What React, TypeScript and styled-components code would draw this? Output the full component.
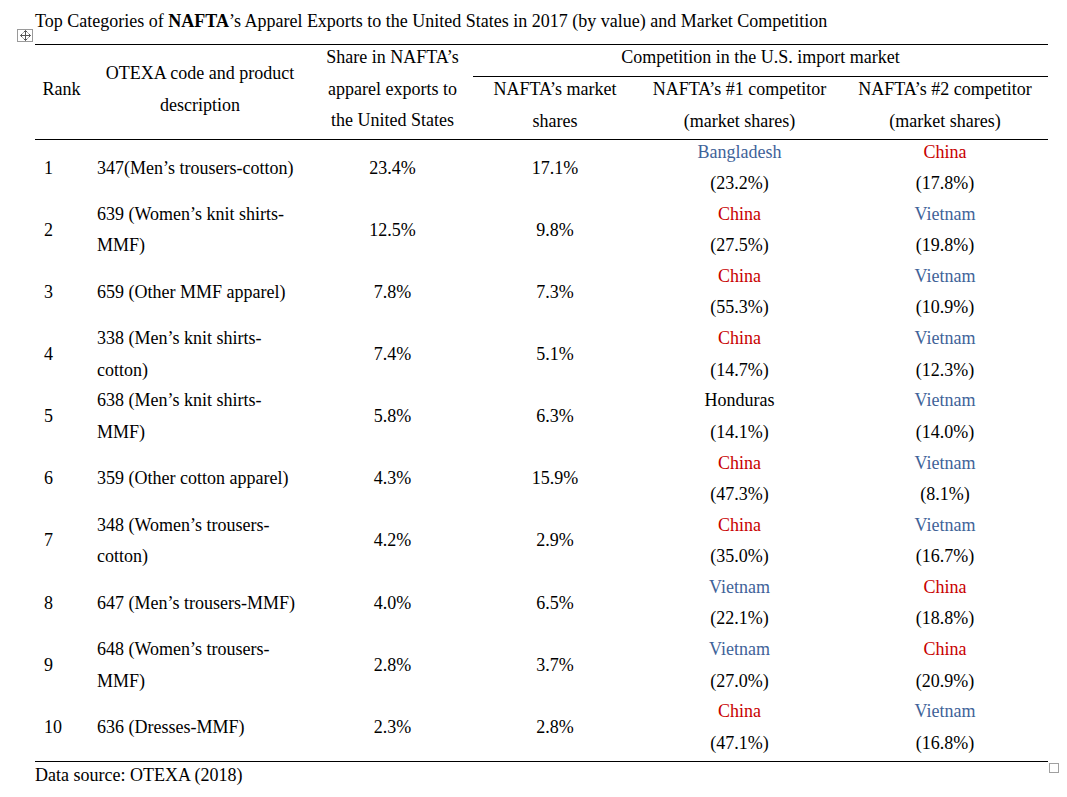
import styled, { createGlobalStyle } from "styled-components";

type Tone = "red" | "blue" | "black";

interface Competitor {
  name: string;
  tone: Tone;
  share: string;
}

interface Row {
  rank: number;
  product: string[];
  share: string;
  nafta: string;
  first: Competitor;
  second: Competitor;
}

const rows: Row[] = [
  { rank: 1, product: ["347(Men’s trousers-cotton)"], share: "23.4%", nafta: "17.1%", first: { name: "Bangladesh", tone: "blue", share: "(23.2%)" }, second: { name: "China", tone: "red", share: "(17.8%)" } },
  { rank: 2, product: ["639 (Women’s knit shirts-", "MMF)"], share: "12.5%", nafta: "9.8%", first: { name: "China", tone: "red", share: "(27.5%)" }, second: { name: "Vietnam", tone: "blue", share: "(19.8%)" } },
  { rank: 3, product: ["659 (Other MMF apparel)"], share: "7.8%", nafta: "7.3%", first: { name: "China", tone: "red", share: "(55.3%)" }, second: { name: "Vietnam", tone: "blue", share: "(10.9%)" } },
  { rank: 4, product: ["338 (Men’s knit shirts-", "cotton)"], share: "7.4%", nafta: "5.1%", first: { name: "China", tone: "red", share: "(14.7%)" }, second: { name: "Vietnam", tone: "blue", share: "(12.3%)" } },
  { rank: 5, product: ["638 (Men’s knit shirts-", "MMF)"], share: "5.8%", nafta: "6.3%", first: { name: "Honduras", tone: "black", share: "(14.1%)" }, second: { name: "Vietnam", tone: "blue", share: "(14.0%)" } },
  { rank: 6, product: ["359 (Other cotton apparel)"], share: "4.3%", nafta: "15.9%", first: { name: "China", tone: "red", share: "(47.3%)" }, second: { name: "Vietnam", tone: "blue", share: "(8.1%)" } },
  { rank: 7, product: ["348 (Women’s trousers-", "cotton)"], share: "4.2%", nafta: "2.9%", first: { name: "China", tone: "red", share: "(35.0%)" }, second: { name: "Vietnam", tone: "blue", share: "(16.7%)" } },
  { rank: 8, product: ["647 (Men’s trousers-MMF)"], share: "4.0%", nafta: "6.5%", first: { name: "Vietnam", tone: "blue", share: "(22.1%)" }, second: { name: "China", tone: "red", share: "(18.8%)" } },
  { rank: 9, product: ["648 (Women’s trousers-", "MMF)"], share: "2.8%", nafta: "3.7%", first: { name: "Vietnam", tone: "blue", share: "(27.0%)" }, second: { name: "China", tone: "red", share: "(20.9%)" } },
  { rank: 10, product: ["636 (Dresses-MMF)"], share: "2.3%", nafta: "2.8%", first: { name: "China", tone: "red", share: "(47.1%)" }, second: { name: "Vietnam", tone: "blue", share: "(16.8%)" } },
];

const toneColor: Record<Tone, string> = {
  red: "#c80000",
  blue: "#3f6399",
  black: "#000000",
};

function Lines({ lines }: { lines: string[] }) {
  return (
    <>
      {lines.map((l, i) => (
        <span key={i}>
          {i > 0 && <br />}
          {l}
        </span>
      ))}
    </>
  );
}

export default function App() {
  return (
    <>
      <GlobalStyle />
      <Page>
        <Title>
          Top Categories of <b>NAFTA</b>’s Apparel Exports to the United States in 2017 (by value) and Market
          Competition
        </Title>
        <TableWrap>
          {/* word table move handle */}
          <MoveHandle>
            <svg width="11" height="11" viewBox="0 0 11 11">
              <path d="M5.5 0.5v10M0.5 5.5h10M5.5 0.5l-2 2M5.5 0.5l2 2M5.5 10.5l-2-2M5.5 10.5l2-2M0.5 5.5l2-2M0.5 5.5l2 2M10.5 5.5l-2-2M10.5 5.5l-2 2" stroke="#555" strokeWidth="1" fill="none" />
            </svg>
          </MoveHandle>
          <Table>
            <colgroup>
              <col style={{ width: 53 }} />
              <col style={{ width: 224 }} />
              <col style={{ width: 161 }} />
              <col style={{ width: 164 }} />
              <col style={{ width: 205 }} />
              <col style={{ width: 206 }} />
            </colgroup>
            <thead>
              <HeadRow $h={32}>
                <Th rowSpan={2} $top>
                  <CellText>Rank</CellText>
                </Th>
                <Th rowSpan={2} $top>
                  <CellText>
                    <Lines lines={["OTEXA code and product", "description"]} />
                  </CellText>
                </Th>
                <Th rowSpan={2} $top>
                  <CellText>
                    <Lines lines={["Share in NAFTA’s", "apparel exports to", "the United States"]} />
                  </CellText>
                </Th>
                <Th colSpan={3} $top>
                  <CellText>Competition in the U.S. import market</CellText>
                </Th>
              </HeadRow>
              <HeadRow $h={63}>
                <Th $sub>
                  <CellText>
                    <Lines lines={["NAFTA’s market", "shares"]} />
                  </CellText>
                </Th>
                <Th $sub>
                  <CellText>
                    <Lines lines={["NAFTA’s #1 competitor", "(market shares)"]} />
                  </CellText>
                </Th>
                <Th $sub>
                  <CellText>
                    <Lines lines={["NAFTA’s #2 competitor", "(market shares)"]} />
                  </CellText>
                </Th>
              </HeadRow>
            </thead>
            <tbody>
              {rows.map((r, i) => (
                <DataRow key={r.rank} $last={i === rows.length - 1}>
                  <Td $left>
                    <CellText>{r.rank}</CellText>
                  </Td>
                  <Td $left>
                    <CellText>
                      <Lines lines={r.product} />
                    </CellText>
                  </Td>
                  <Td>
                    <CellText>{r.share}</CellText>
                  </Td>
                  <Td>
                    <CellText>{r.nafta}</CellText>
                  </Td>
                  <Td>
                    <CellText>
                      <Country $tone={r.first.tone}>{r.first.name}</Country>
                      <br />
                      {r.first.share}
                    </CellText>
                  </Td>
                  <Td>
                    <CellText>
                      <Country $tone={r.second.tone}>{r.second.name}</Country>
                      <br />
                      {r.second.share}
                    </CellText>
                  </Td>
                </DataRow>
              ))}
            </tbody>
          </Table>
          <ResizeHandle />
        </TableWrap>
        <Source>Data source: OTEXA (2018)</Source>
      </Page>
    </>
  );
}

const GlobalStyle = createGlobalStyle`
  html, body {
    margin: 0;
    padding: 0;
    background: #ffffff;
  }
  body {
    font-family: "Liberation Serif", "Times New Roman", serif;
    font-size: 18px;
    color: #000000;
  }
`;

const Page = styled.div`
  width: 1013px;
  padding-left: 35px;
`;

const Title = styled.div`
  height: 44px;
  padding-top: 6px;
  box-sizing: border-box;
  line-height: 31px;
  white-space: nowrap;
`;

const TableWrap = styled.div`
  position: relative;
`;

const MoveHandle = styled.div`
  position: absolute;
  left: -18px;
  top: -15px;
  width: 16px;
  height: 13px;
  border: 1px solid #9a9a9a;
  box-sizing: border-box;
  display: flex;
  align-items: center;
  justify-content: center;
  background: #fff;
`;

const ResizeHandle = styled.div`
  position: absolute;
  right: -11px;
  bottom: -11px;
  width: 10px;
  height: 10px;
  border: 1px solid #a0a0a0;
  box-sizing: border-box;
`;

const Table = styled.table`
  width: 1013px;
  table-layout: fixed;
  border-collapse: collapse;
`;

const HeadRow = styled.tr<{ $h: number }>`
  height: ${(p) => p.$h}px;
`;

const Th = styled.th<{ $top?: boolean; $sub?: boolean }>`
  padding: 0;
  font-weight: normal;
  text-align: center;
  vertical-align: middle;
  border-top: ${(p) => (p.$top || p.$sub ? "1px solid #000" : "none")};
  border-bottom: ${(p) => (p.$top && !p.$sub ? "none" : "1px solid #000")};
  &[rowspan] {
    border-bottom: 1px solid #000;
  }
`;

const DataRow = styled.tr<{ $last?: boolean }>`
  height: 62.2px;
  border-bottom: ${(p) => (p.$last ? "1px solid #000" : "none")};
`;

const Td = styled.td<{ $left?: boolean }>`
  padding: 0 0 0 ${(p) => (p.$left ? "9px" : "0")};
  text-align: ${(p) => (p.$left ? "left" : "center")};
  vertical-align: middle;
`;

const CellText = styled.div`
  line-height: 31.5px;
  margin-top: -5px;
  white-space: nowrap;
`;

const Country = styled.span<{ $tone: Tone }>`
  color: ${(p) => toneColor[p.$tone]};
`;

const Source = styled.div`
  line-height: 26px;
`;
